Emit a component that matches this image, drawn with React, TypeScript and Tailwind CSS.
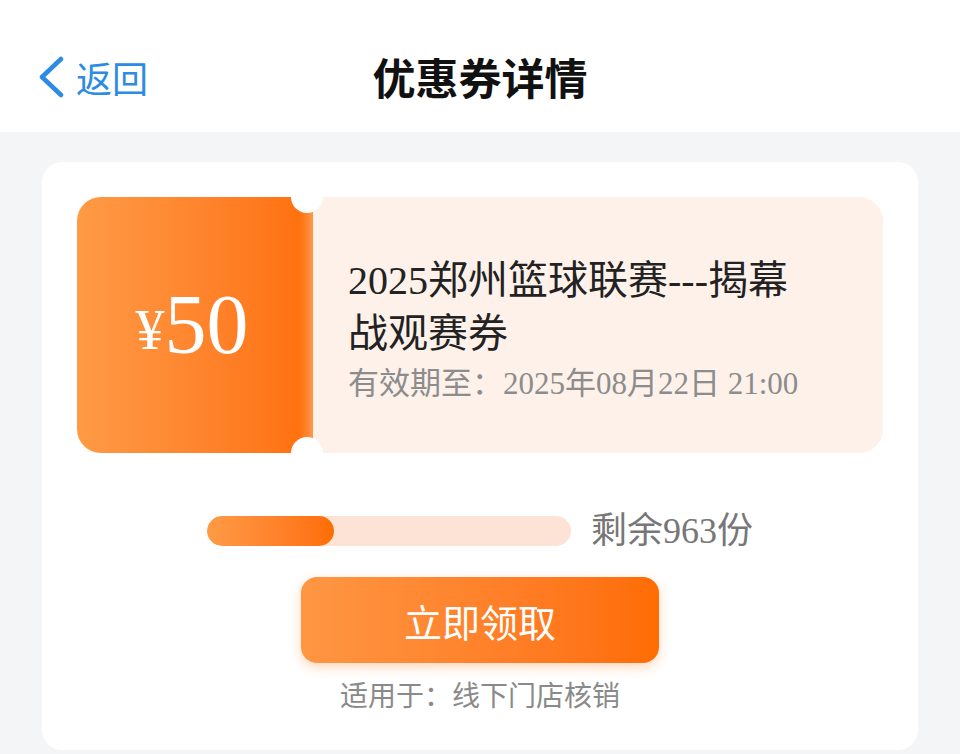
export default function App() {
    const remaining = 963;
    const progress = 35;
    const cjk = { fontFamily: '"Liberation Serif", "Noto Sans CJK SC", serif' };
    const sans = { fontFamily: '"Noto Sans CJK SC", "Noto Sans", sans-serif' };

    return (
        <div className="w-[960px] h-[754px] overflow-hidden bg-[#f4f5f7]">
            {/* Header */}
            <header className="h-[132px] bg-white pt-[20px] flex items-center relative">
                <div className="absolute left-[36px] top-[56px] flex items-center gap-[10px] text-[#2c8be2]">
                    <svg width="30" height="42" viewBox="0 0 30 42" fill="none">
                        <path d="M25 3 L6 21 L25 39" stroke="#2c8be2" strokeWidth="4.5" strokeLinecap="round" strokeLinejoin="round" />
                    </svg>
                    <span className="text-[36px] leading-none" style={sans}>返回</span>
                </div>
                <h1 className="w-full text-center text-[43px] font-bold text-[#111] leading-none" style={sans}>
                    优惠券详情
                </h1>
            </header>

            {/* Card */}
            <div className="mx-[42px] mt-[30px] h-[588px] bg-white rounded-[20px] px-[35px] pt-[35px]">
                {/* Coupon */}
                <div className="relative flex h-[256px]">
                    <div className="w-[236px] rounded-l-[24px] bg-gradient-to-r from-[#ff9a45] to-[#ff6f06] flex items-center justify-center text-white pr-[6px]" style={cjk}>
                        <span className="text-[58px] leading-none mt-[10px]">¥</span>
                        <span className="text-[84px] leading-none">50</span>
                    </div>
                    <div className="flex-1 rounded-r-[24px] bg-[#fdf1ea] pl-[35px] pt-[57px] shadow-[-6px_0_10px_rgba(255,255,255,0.3)]" style={cjk}>
                        <div className="text-[40px] leading-[53px] text-[#222] w-[470px]">
                            2025郑州篮球联赛---揭幕战观赛券
                        </div>
                        <div className="text-[31px] leading-[40px] text-[#8c8c8c] mt-[4px]">
                            有效期至：2025年08月22日 21:00
                        </div>
                    </div>
                    <div className="absolute left-[214px] top-[-16px] w-[32px] h-[32px] rounded-full bg-white" />
                    <div className="absolute left-[214px] bottom-[-16px] w-[32px] h-[32px] rounded-full bg-white" />
                </div>

                {/* Progress */}
                <div className="mt-[60px] flex items-center justify-center gap-[20px]">
                    <div className="w-[364px] h-[30px] rounded-full bg-[#fde3d5] overflow-hidden">
                        <div className="h-full rounded-full bg-gradient-to-r from-[#ff9a45] to-[#ff6d00]" style={{ width: `${progress}%` }} />
                    </div>
                    <span className="text-[36px] leading-none text-[#777]" style={cjk}>剩余{remaining}份</span>
                </div>

                {/* Button */}
                <div className="mt-[28px] flex justify-center">
                    <button className="w-[358px] h-[86px] rounded-[16px] bg-gradient-to-r from-[#ff9642] to-[#ff6c02] text-white text-[38px] shadow-[0_4px_12px_rgba(255,120,20,0.3)]" style={sans}>
                        立即领取
                    </button>
                </div>

                <p className="mt-[17px] text-center text-[28px] leading-none text-[#8a8a8a]" style={sans}>
                    适用于：线下门店核销
                </p>
            </div>
        </div>
    );
}
